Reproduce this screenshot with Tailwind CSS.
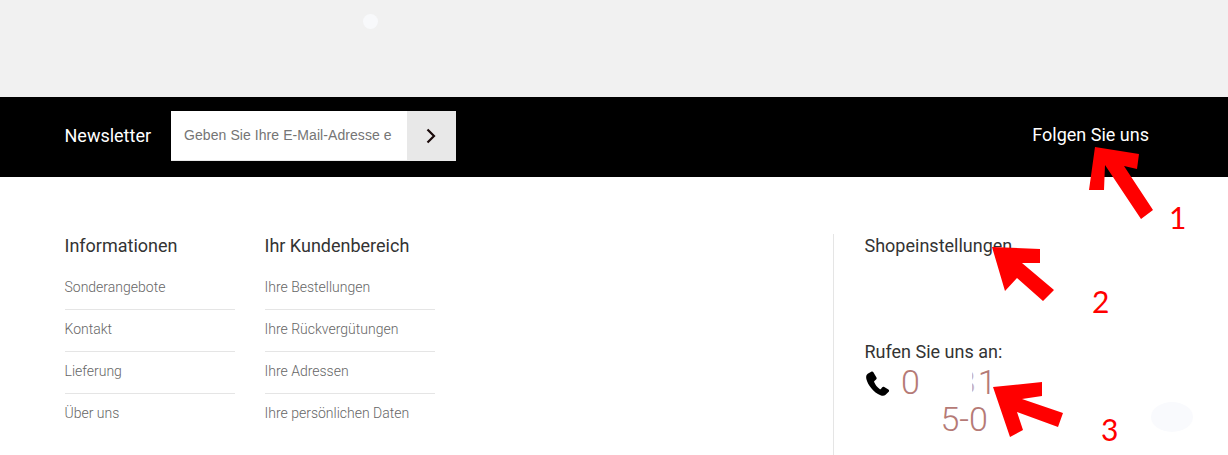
<!DOCTYPE html>
<html lang="de">
<head>
  <meta charset="UTF-8">
  <title>Footer</title>
  <script src="https://cdn.jsdelivr.net/npm/@tailwindcss/browser@4"></script>
</head>
<body class="relative h-[455px] overflow-hidden bg-white font-['Roboto',sans-serif]">
  <!-- Grey band -->
  <div class="relative h-[97px] bg-[#f1f1f1]">
    <span class="absolute left-[363px] top-[14px] h-[15px] w-[15px] rounded-full bg-[#f8f9fb]"></span>
  </div>

  <!-- Newsletter bar -->
  <div class="flex h-[80px] items-center justify-between bg-black pl-[64.500px] pr-[79px] text-white">
    <div class="flex items-center gap-[19.500px]">
      <span class="mt-[-2px] text-[18px] leading-[28px]">Newsletter</span>
      <form class="mt-[-2px] flex h-[50px] w-[285px] border-b border-[#e8e8e8] bg-white">
        <input type="text" placeholder="Geben Sie Ihre E-Mail-Adresse ein" class="w-[236px] bg-white pl-[13.500px] pr-[15px] font-['Liberation_Sans',sans-serif] text-[14px] tracking-[0.07px] text-[#757575] placeholder:text-[#757575] outline-none">
        <button type="button" class="flex flex-1 items-center justify-center bg-[#e8e8e8]">
          <svg width="12" height="16" viewBox="0 0 12 16" fill="none" stroke="#1a0a0a" stroke-width="2.2"><path d="M2.5 1.5 9 8l-6.500 6.500"/></svg>
        </button>
      </form>
    </div>
    <span class="mt-[-5px] text-[18px] leading-[24px]">Folgen Sie uns</span>
  </div>

  <!-- Footer columns -->
  <div class="flex pl-[64.500px] pt-[57px]">
    <div class="w-[170.500px]">
      <h4 class="text-[18px] leading-[24px] text-[#333]">Informationen</h4>
      <ul class="mt-[10px] text-[14px] font-light text-[#666]">
        <li class="h-[42px] border-b border-[#e5e5e5] pt-[9px] leading-[20px]">Sonderangebote</li>
        <li class="h-[42px] border-b border-[#e5e5e5] pt-[9px] leading-[20px]">Kontakt</li>
        <li class="h-[42px] border-b border-[#e5e5e5] pt-[9px] leading-[20px]">Lieferung</li>
        <li class="h-[42px] pt-[9px] leading-[20px]">Über uns</li>
      </ul>
    </div>
    <div class="ml-[29.500px] w-[170.500px]">
      <h4 class="text-[18px] leading-[24px] text-[#333]">Ihr Kundenbereich</h4>
      <ul class="mt-[10px] text-[14px] font-light text-[#666]">
        <li class="h-[42px] border-b border-[#e5e5e5] pt-[9px] leading-[20px]">Ihre Bestellungen</li>
        <li class="h-[42px] border-b border-[#e5e5e5] pt-[9px] leading-[20px]">Ihre Rückvergütungen</li>
        <li class="h-[42px] border-b border-[#e5e5e5] pt-[9px] leading-[20px]">Ihre Adressen</li>
        <li class="h-[42px] pt-[9px] leading-[20px]">Ihre persönlichen Daten</li>
      </ul>
    </div>
    <div class="ml-[398px] h-[221px] w-[300px] border-l border-[#e5e5e5] pl-[30.500px]">
      <h4 class="text-[18px] leading-[24px] text-[#333]">Shopeinstellungen</h4>
      <p class="mt-[82px] text-[18px] leading-[24px] text-[#333]">Rufen Sie uns an:</p>
      <div class="relative h-[80px] text-[34px] font-light leading-[37px] text-[#b57a76]">
        <svg class="absolute left-0 top-[7px]" width="26" height="26" viewBox="0 0 26 27"><path fill="#000" d="M6 .8 2.300 2.900C.8 3.900.4 5.800.9 8.200c1.500 6.300 7.500 14 14.700 16.900 2.100.9 4 .7 5.300-.5l3.200-3c.7-.7.5-1.700-.3-2.300l-4.300-2.700c-.8-.5-1.500-.4-2.100.3l-1.400 1.700c-.4.400-.9.500-1.300.2-2.500-1.800-4.500-4.400-5.700-7.300-.2-.5-.1-.9.300-1.200l1.700-1.400c.7-.6.800-1.300.4-2.100L8.200 1.400C7.700.6 6.900.3 6 .8Z"/></svg>
        <div class="flex pl-[36.500px]">
          <span>0</span>
          <!-- rest of the number is whited out, only a sliver of the 8 shows -->
          <span class="ml-[52px] w-[4px] overflow-hidden"><span class="ml-[-15px] text-[#c9b4c4]">8</span></span>
          <span class="ml-[2px]">1</span>
        </div>
        <div class="pl-[76px]">5-0</div>
      </div>
    </div>
  </div>

  <!-- Annotation overlays -->
  <svg class="absolute left-0 top-0" width="1228" height="455" viewBox="0 0 1228 455" fill="#ff0000">
    <path d="M1095 147 1139 154 1137 169 1124 166 1153 210 1141 219 1105 165 1104 190 1089 190Z"/>
    <path d="M992 247 1040 249 1040 263 1022 263 1054 290 1043 301 1017 278 1005 291Z"/>
    <path d="M993 387 1042 382 1042 396 1022 399 1063 413 1058 427 1017 412 1023 430 1010 437Z"/>
    <ellipse cx="1172" cy="417" rx="21" ry="15" fill="#f9fafd"/>
  </svg>
  <span class="absolute left-[1169px] top-[197px] font-['Lato',sans-serif] text-[30px] leading-[40px] text-[#ff0000]">1</span>
  <span class="absolute left-[1092px] top-[281px] font-['Lato',sans-serif] text-[30px] leading-[40px] text-[#ff0000]">2</span>
  <span class="absolute left-[1101px] top-[409px] font-['Lato',sans-serif] text-[30px] leading-[40px] text-[#ff0000]">3</span>
</body>
</html>
